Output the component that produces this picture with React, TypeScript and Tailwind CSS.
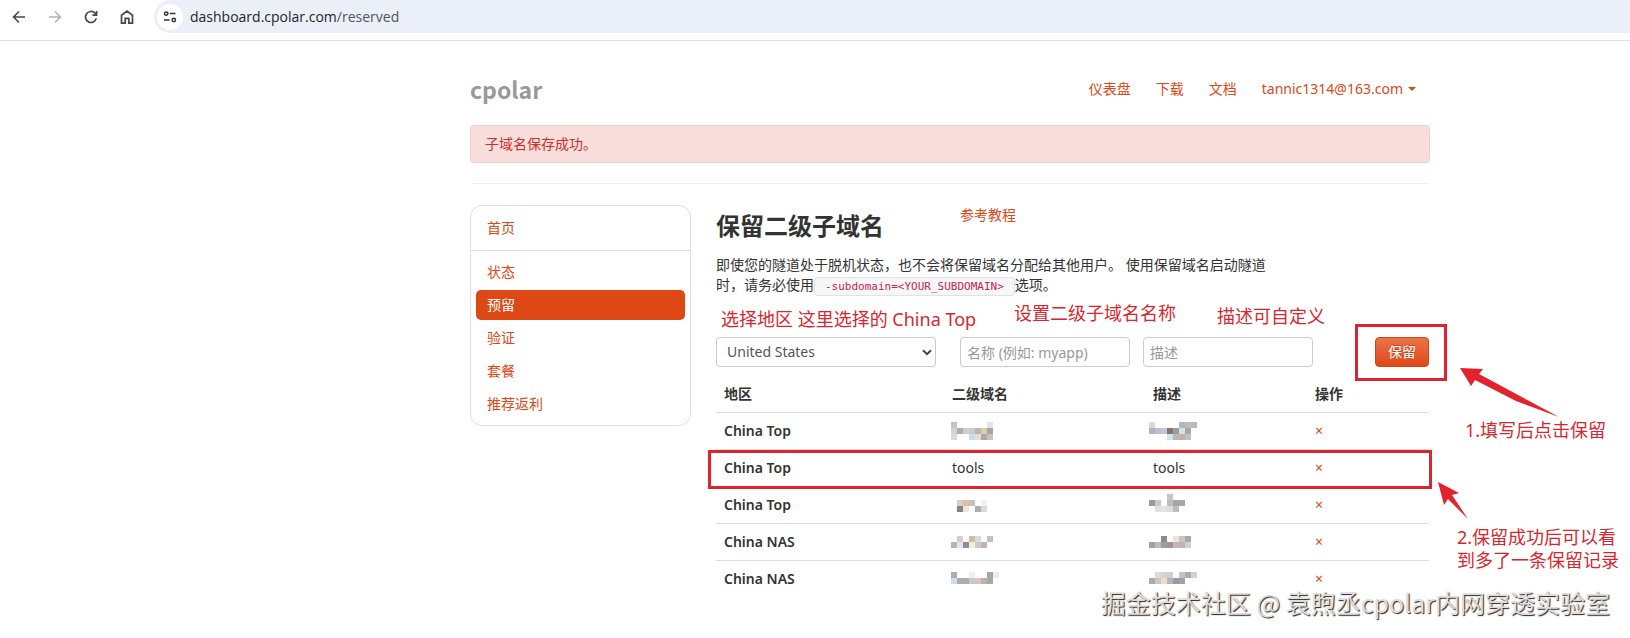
import { clsx } from 'clsx'

type Row = { region: string; name: string; desc: string; nameMask?: Mask; descMask?: Mask }
type Mask = { x: number; y: number; cells: string[] }

// each string is one line of 6px blocks, "-" leaves the block empty
const rows: Row[] = [
  {
    region: 'China Top',
    name: '',
    desc: '',
    nameMask: {
      x: -1,
      y: 1,
      cells: [
        'c3c3c5 - - - - - e2e6e2',
        'ccd5d5 a9b0b4 cfcdc8 cfcac4 b9b6b8 dccfa5 a5a6a6',
        'd8dcdf - - c5def0 e8dbd6 aca8a9 c3c2c1',
      ],
    },
    descMask: {
      x: -4,
      y: 1,
      cells: [
        'e0d5d0 - - - - b5b6b9 bdbdbf b9b9b9',
        'b5b3b5 b0c3d8 c5c5cd 857476 9c9a9c cfe3ef a8a8ab',
        '- - - d3e3ee b9b9bb c8ada0 c3c3c6',
      ],
    },
  },
  { region: 'China Top', name: 'tools', desc: 'tools' },
  {
    region: 'China Top',
    name: '',
    desc: '',
    nameMask: { x: 5, y: 5, cells: ['d2d0d3 dcbfa6 c2c3c8 - eef2f5', '8a8183 f0e6d8 - b3abab d5dadf'] },
    descMask: {
      x: -4,
      y: -1,
      cells: ['- - - c5c5c7', '9c9a9c c9c9cb - bdbdbf 9caaa8 b3a3a3', '- dfe0e2 e2e3e5 dcdde0 bcbcc0'],
    },
  },
  {
    region: 'China NAS',
    name: '',
    desc: '',
    nameMask: {
      x: -1,
      y: 4,
      cells: ['- d8d0c8 - d0bda8 d5dcec - c2c2c2', 'b3b3ca e2e5ee 8f8d8d f5ecdd d6c8c0 b9b6b5'],
    },
    descMask: {
      x: -4,
      y: 4,
      cells: ['- - 8c8a8c - efe3d8 c9c5c5 a8a6a6', 'a3a1a1 bdbbbb a09da0 9a989a c9b5ad c3b3b0 d5cfcb'],
    },
  },
  {
    region: 'China NAS',
    name: '',
    desc: '',
    nameMask: {
      x: -1,
      y: 3,
      cells: ['a9adb4 - - eef0f5 - - a5a8a3 e5f0ec', 'cbdeee adabab b3aba8 c6c6cd dcc3b3 b5b3b0 a5a8a3'],
    },
    descMask: {
      x: -4,
      y: 3,
      cells: ['- e0d9d6 d3d1d3 cfcfd3 - c3c6c8 a5adad cfd3d5', 'b0a8ab cfc6c3 f2dcc3 b5b3bb 9c9a9f a3a1a6'],
    },
  },
]

const sideLinks = ['状态', '预留', '验证', '套餐', '推荐返利']

function Mosaic({ mask }: { mask: Mask }) {
  return (
    <svg className="block h-5 w-12 overflow-visible" shapeRendering="crispEdges" aria-hidden="true">
      {mask.cells.map((line, r) =>
        line.split(' ').map((c, i) =>
          c === '-' ? null : (
            <rect key={`${r}-${i}`} x={mask.x + i * 6} y={mask.y + r * 6} width="6" height="6" fill={`#${c}`} />
          ),
        ),
      )}
    </svg>
  )
}

function BrowserBar() {
  return (
    <div className="flex h-[41px] items-start border-b border-[#dcdfe3] pl-3">
      <div className="flex h-[33px] items-center gap-[22px] text-[#474747]">
        <button aria-label="Back">
          <svg width="14" height="14" viewBox="0 0 14 14" fill="none" stroke="currentColor" strokeWidth="1.6">
            <path d="M13 7H2M7 1.5 1.5 7 7 12.5" />
          </svg>
        </button>
        <button aria-label="Forward" className="text-[#b4b4b4]">
          <svg width="14" height="14" viewBox="0 0 14 14" fill="none" stroke="currentColor" strokeWidth="1.6">
            <path d="M1 7h11M7 1.5 12.5 7 7 12.5" />
          </svg>
        </button>
        <button aria-label="Reload">
          <svg width="14" height="14" viewBox="0 0 14 14" fill="none" stroke="currentColor" strokeWidth="1.7">
            <path d="M12.3 8.4A5.5 5.5 0 1 1 11 3.2l1.4 1.5" />
            <path d="M12.6 1v4.2H8.4" />
          </svg>
        </button>
        <button aria-label="Home">
          <svg width="14" height="16" viewBox="0 0 14 16" fill="none" stroke="currentColor" strokeWidth="1.7">
            <path d="M1.5 14.2V6.2L7 2l5.5 4.2v8H8.8V9.3H5.2v4.9Z" />
          </svg>
        </button>
      </div>
      <div className="ml-5 flex h-[33px] flex-1 items-center rounded-l-full bg-[#ebf0f8] pl-[3px]">
        <span className="flex size-[26px] items-center justify-center rounded-full bg-white">
          <svg width="14" height="12" viewBox="0 0 14 12" fill="none" stroke="#333" strokeWidth="1.5">
            <circle cx="3.2" cy="2.6" r="1.7" />
            <path d="M6.8 2.6H12.5M1 9h5.5" />
            <circle cx="10.8" cy="9" r="1.7" />
          </svg>
        </span>
        <span className="ml-[7px] font-['Open_Sans',sans-serif] text-sm text-[#1f1f1f]">
          dashboard.cpolar.com<span className="text-[#50555b]">/reserved</span>
        </span>
      </div>
    </div>
  )
}

function Sidebar() {
  return (
    <nav className="w-[221px] shrink-0 self-start rounded-xl border border-[#dddfe0] text-[#dd4814]">
      <div className="border-b border-[#dddfe0] px-[5px] py-[7px]">
        <a href="#" className="block px-[11px] py-[5px]">首页</a>
      </div>
      <div className="flex flex-col gap-[3px] px-[5px] py-[6px]">
        {sideLinks.map((l) => (
          <a
            key={l}
            href="#"
            className={clsx('block rounded-[5px] px-[11px] py-[5px]', l === '预留' && 'bg-[#dd4814] text-white')}
          >
            {l}
          </a>
        ))}
      </div>
    </nav>
  )
}

const field = 'h-[30px] rounded border border-[#ccc] bg-white text-[#555] placeholder:text-[#999]'
const note = "absolute whitespace-nowrap font-['Noto_Sans','Noto_Sans_CJK_SC',sans-serif] text-[18px] leading-[23px] text-[#d9262e]"

function ReserveForm() {
  return (
    <form className="relative mt-[42px] flex items-center" onSubmit={(e) => e.preventDefault()}>
      <div className="relative w-[220px]">
        <select aria-label="地区" className={clsx(field, 'w-full appearance-none pl-[10px]')}>
          <option>United States</option>
          <option>China Top</option>
          <option>China NAS</option>
        </select>
        <svg className="pointer-events-none absolute top-3 right-1" width="10" height="7" viewBox="0 0 10 7" fill="none" stroke="#444" strokeWidth="2">
          <path d="m1 1.2 4 4 4-4" />
        </svg>
      </div>
      <input aria-label="名称" placeholder="名称 (例如: myapp)" className={clsx(field, 'ml-6 w-[170px] px-[6px]')} />
      <input aria-label="描述" placeholder="描述" className={clsx(field, 'ml-[13px] w-[170px] px-[6px]')} />
      <div className="relative ml-auto">
        <button className="block h-[30px] w-[54px] rounded border border-[#c9491f] bg-linear-to-b from-[#ec7346] to-[#dd4814] text-white [text-shadow:0_-1px_0_rgba(0,0,0,0.25)]">
          保留
        </button>
        <span className="pointer-events-none absolute -top-[13px] -right-[18px] -bottom-[14px] -left-5 border-[3px] border-[#d9262e]" />
      </div>
      <span className={clsx(note, 'bottom-9 left-[5px]')}>选择地区 这里选择的 China Top</span>
      <span className={clsx(note, 'bottom-[42px] left-[298px]')}>设置二级子域名名称</span>
      <span className={clsx(note, 'bottom-[39px] left-[501px]')}>描述可自定义</span>
    </form>
  )
}

function DomainTable() {
  return (
    <table className="mt-[9px] w-full table-fixed text-left">
      <thead>
        <tr className="[&>th]:px-2 [&>th]:py-2 [&>th]:font-semibold">
          <th className="w-[228px]">地区</th>
          <th className="w-[201px]">二级域名</th>
          <th className="w-[162px]">描述</th>
          <th>操作</th>
        </tr>
      </thead>
      <tbody>
        {rows.map((r, i) => (
          <tr key={i} className="relative border-t border-[#ddd] [&>td]:p-2">
            <td className="font-semibold">
              {r.region}
              {r.name === 'tools' && (
                <span className="pointer-events-none absolute -top-px -right-[3px] -bottom-[2px] -left-2 z-10 border-[3px] border-[#d9262e]" />
              )}
            </td>
            <td>{r.nameMask ? <Mosaic mask={r.nameMask} /> : r.name}</td>
            <td>{r.descMask ? <Mosaic mask={r.descMask} /> : r.desc}</td>
            <td>
              <button aria-label="删除" className="block h-5 text-[#dd4814]">×</button>
            </td>
          </tr>
        ))}
      </tbody>
    </table>
  )
}

export default function App() {
  return (
    <div className="relative min-h-screen overflow-hidden bg-white font-['Noto_Sans','Noto_Sans_CJK_SC',sans-serif] text-sm text-[#333]">
      <BrowserBar />
      <div className="relative ml-[470px] max-w-[960px]">
        <header className="flex h-[84px] items-center justify-between pt-[11px]">
          <a href="#" className="font-['Noto_Sans_CJK_SC',sans-serif] text-[23px] leading-9 font-bold text-[#999]">cpolar</a>
          <nav className="mr-[14px] flex gap-[25px] text-[#dd4814]">
            <a href="#">仪表盘</a>
            <a href="#">下载</a>
            <a href="#">文档</a>
            <a href="#" className="flex items-center gap-[5px]">
              tannic1314@163.com
              <svg width="8" height="4" viewBox="0 0 8 4" fill="currentColor">
                <path d="M0 0h8L4 4Z" />
              </svg>
            </a>
          </nav>
        </header>

        <div role="alert" className="rounded border border-[#f2cfcf] bg-[#f9dedc] px-[14px] py-2 text-[#c9302c]">
          子域名保存成功。
        </div>
        <hr className="mx-[2px] mt-5 border-[#eee]" />

        <div className="mt-[21px] flex gap-[25px] pr-px">
          <Sidebar />
          <main className="min-w-0 flex-1">
            <div className="flex">
              <h1 className="w-[244px] text-[24px] leading-[42px] font-bold">保留二级子域名</h1>
              <a href="#" className="self-start text-[#dd4814]">参考教程</a>
            </div>
            <p className="mt-2 max-w-[556px]">
              即使您的隧道处于脱机状态，也不会将保留域名分配给其他用户。 使用保留域名启动隧道时，请务必使用
              <code className="rounded border border-[#e1e1e8] bg-[#f7f7f9] px-[10px] py-[2px] font-['DejaVu_Sans_Mono',monospace] text-[11px] text-[#c7254e]">
                -subdomain=&lt;YOUR_SUBDOMAIN&gt;
              </code>
              选项。
            </p>
            <ReserveForm />
            <DomainTable />
          </main>
        </div>

        {/* step notes beside the table */}
        <span className={clsx(note, 'top-[378px] left-[995px]')}>1.填写后点击保留</span>
        <span className={clsx(note, 'top-[485px] left-[987px]')}>
          2.保留成功后可以看
          <br />
          到多了一条保留记录
        </span>
        <svg className="pointer-events-none absolute top-[325px] left-[987px]" width="110" height="160" viewBox="0 0 110 160" fill="#e3222b">
          <path d="M3 2 26 3 22 8 102 51 59 35 18 14 14 20Z" />
        </svg>
        <svg className="pointer-events-none absolute top-[439px] left-[966px]" width="40" height="42" viewBox="0 0 40 42" fill="#e3222b">
          <path d="M2 2 23 13 16 15 32 39 12 19 8 25Z" />
        </svg>
      </div>

      <p className="pointer-events-none absolute right-5 bottom-[18px] font-['Noto_Sans_CJK_SC',sans-serif] text-[25px] leading-9 whitespace-nowrap text-[#dedede] [text-shadow:1px_1px_1px_#222,-1px_-1px_0_#fff]">
        掘金技术社区 @ 袁煦丞cpolar内网穿透实验室
      </p>
    </div>
  )
}
